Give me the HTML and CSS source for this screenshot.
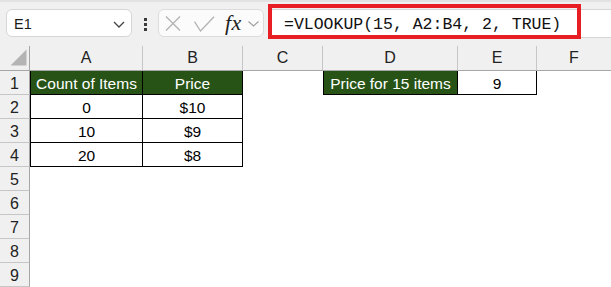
FILE: index.html
```html
<!DOCTYPE html>
<html>
<head>
<meta charset="utf-8">
<link rel="stylesheet" href="styles.css">
</head>
<body>
<div class="app">
  <div class="toolbar">
    <div class="namebox">
      <span class="nb-text">E1</span>
      <svg class="chev" width="12" height="7" viewBox="0 0 12 7"><path d="M1 1 L6 6 L11 1" fill="none" stroke="#444" stroke-width="1.3"/></svg>
    </div>
    <div class="dots"><span></span><span></span><span></span></div>
    <div class="fxbox">
      <svg class="ic-x" width="16" height="15" viewBox="0 0 16 15"><path d="M1 0.5 L15 14.5 M15 0.5 L1 14.5" stroke="#b3b3b3" stroke-width="1.3" fill="none"/></svg>
      <svg class="ic-check" width="21" height="16" viewBox="0 0 21 16"><path d="M0.5 5.7 L6.5 15 L20 0.7" stroke="#b3b3b3" stroke-width="1.3" fill="none"/></svg>
      <span class="fx">fx</span>
      <svg class="ic-chev2" width="11" height="6" viewBox="0 0 11 6"><path d="M0.5 0.5 L5.5 5 L10.5 0.5" fill="none" stroke="#a0a0a0" stroke-width="1.2"/></svg>
    </div>
    <div class="formula">=VLOOKUP(15, A2:B4, 2, TRUE)</div>
  </div>
  <div class="highlight"></div>
  <div class="sheet">
    <div class="corner"><svg width="17" height="17" viewBox="0 0 17 17"><polygon points="16.5,0.5 16.5,16.5 0.5,16.5" fill="#b4b4b4"/></svg></div>
    <div class="ch">A</div>
    <div class="ch">B</div>
    <div class="ch">C</div>
    <div class="ch">D</div>
    <div class="ch">E</div>
    <div class="ch last">F</div>

    <div class="rh">1</div>
    <div class="cell tb tl green">Count of Items</div>
    <div class="cell tb green">Price</div>
    <div class="cell"></div>
    <div class="cell tb tl green">Price for 15 items</div>
    <div class="cell tb">9</div>
    <div class="cell"></div>

    <div class="rh">2</div>
    <div class="cell tb tl">0</div>
    <div class="cell tb">$10</div>
    <div class="cell"></div><div class="cell"></div><div class="cell"></div><div class="cell"></div>

    <div class="rh">3</div>
    <div class="cell tb tl">10</div>
    <div class="cell tb">$9</div>
    <div class="cell"></div><div class="cell"></div><div class="cell"></div><div class="cell"></div>

    <div class="rh">4</div>
    <div class="cell tb tl">20</div>
    <div class="cell tb">$8</div>
    <div class="cell"></div><div class="cell"></div><div class="cell"></div><div class="cell"></div>

    <div class="rh">5</div>
    <div class="cell"></div><div class="cell"></div><div class="cell"></div><div class="cell"></div><div class="cell"></div><div class="cell"></div>
    <div class="rh">6</div>
    <div class="cell"></div><div class="cell"></div><div class="cell"></div><div class="cell"></div><div class="cell"></div><div class="cell"></div>
    <div class="rh">7</div>
    <div class="cell"></div><div class="cell"></div><div class="cell"></div><div class="cell"></div><div class="cell"></div><div class="cell"></div>
    <div class="rh">8</div>
    <div class="cell"></div><div class="cell"></div><div class="cell"></div><div class="cell"></div><div class="cell"></div><div class="cell"></div>
    <div class="rh">9</div>
    <div class="cell"></div><div class="cell"></div><div class="cell"></div><div class="cell"></div><div class="cell"></div><div class="cell"></div>
  </div>
</div>
</body>
</html>
```
FILE: styles.css
```css
* { box-sizing: border-box; }
html, body { margin: 0; padding: 0; background: #fff; }
body {
  width: 611px;
  height: 287px;
  overflow: hidden;
  font-family: "Liberation Sans", Arial, sans-serif;
  color: #000;
}
.app { position: relative; width: 611px; height: 287px; overflow: hidden; }

.toolbar {
  height: 46px;
  display: flex;
  align-items: flex-start;
  padding: 7px 0 0 6px;
  background: #f0f0f0;
  border-top: 2px solid #e2e2e2;
}
.namebox {
  width: 126px;
  height: 28px;
  background: #fff;
  border: 1px solid #d6d6d6;
  border-radius: 6px;
  display: flex;
  align-items: center;
  justify-content: space-between;
  padding: 0 6px 0 7px;
}
.nb-text { font-size: 14.5px; color: #1a1a1a; padding-top: 1px; }
.chev { margin-top: 2px; }

.dots {
  margin-left: 12px;
  margin-top: 9px;
  display: flex;
  flex-direction: column;
  gap: 2.5px;
}
.dots span { display: block; width: 3px; height: 2.5px; background: #3a3a3a; }

.fxbox {
  margin-left: 11px;
  width: 106px;
  height: 28px;
  background: #fbfbfb;
  border: 1px solid #dcdcdc;
  border-radius: 6px;
  display: flex;
  align-items: center;
  padding-left: 6px;
}
.ic-x { margin-top: 1px; }
.ic-check { margin-left: 13px; margin-top: 1px; }
.fx {
  margin-left: 10px;
  font-family: "Liberation Serif", "DejaVu Serif", serif;
  font-style: italic;
  font-size: 22px;
  color: #222;
  line-height: 20px;
  letter-spacing: 0.5px;
}
.ic-chev2 { margin-left: 6px; margin-top: 2px; }

.formula {
  margin-left: 4px;
  flex: 1;
  height: 29px;
  background: #fff;
  border: 1px solid #d6d6d6;
  border-right: none;
  border-radius: 6px 0 0 6px;
  padding: 2px 0 0 15px;
  font-family: "Liberation Mono", "Courier New", monospace;
  font-size: 16.5px;
  line-height: 25px;
  color: #111;
  white-space: nowrap;
}

.highlight {
  position: absolute;
  left: 268px;
  top: 4px;
  width: 313px;
  height: 35px;
  border: 4px solid #e81e25;
  pointer-events: none;
}

.sheet {
  display: grid;
  grid-template-columns: 30px 113px 100px 80px 135px 79px 1fr;
  grid-template-rows: 25px repeat(9, 24px);
  font-size: 15.5px;
}
.corner, .ch {
  background: #f0f0f0;
  border-right: 1px solid #c6c6c6;
  border-bottom: 1px solid #a6a6a6;
}
.corner {
  display: flex;
  align-items: flex-end;
  padding: 0 0 4px 10px;
  border-right-color: #a6a6a6;
}
.ch {
  text-align: center;
  line-height: 24px;
  font-size: 16px;
  color: #222;
}
.ch.last { border-right: none; }
.rh {
  background: #f0f0f0;
  border-right: 1px solid #a6a6a6;
  border-bottom: 1px solid #c6c6c6;
  text-align: center;
  line-height: 23px;
  font-size: 16px;
  padding-top: 1px;
  color: #222;
}
.cell {
  text-align: center;
  line-height: 23px;
  padding-top: 1px;
  white-space: nowrap;
  overflow: hidden;
}
.tb {
  border-right: 1px solid #000;
  border-bottom: 1px solid #000;
}
.tl { border-left: 1px solid #000; }
.green { background: #275317; color: #fff; }
```
